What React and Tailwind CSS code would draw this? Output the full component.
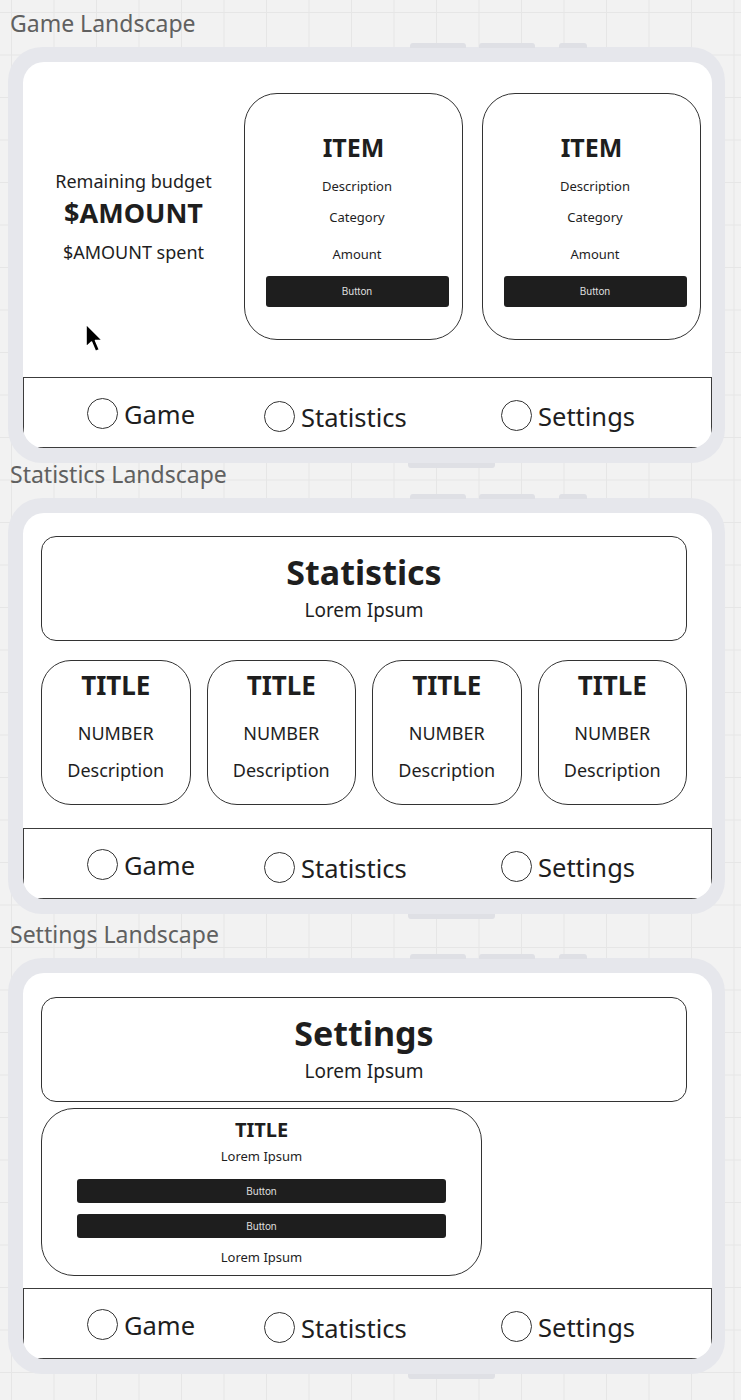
const font = "font-['Noto_Sans',sans-serif]";

const Cursor = () => (
  <svg className="absolute left-[61px] top-[260px]" width="21" height="33" viewBox="0 0 21 33">
    <path
      d="M2 2 L2 25 L7.5 20 L11.5 29.5 L15.5 27.8 L11.5 18.5 L18.5 18.5 Z"
      fill="#000"
      stroke="#fff"
      strokeWidth="1.6"
      strokeLinejoin="round"
    />
  </svg>
);

const DarkButton = ({ className }) => (
  <div
    className={`bg-[#1e1e1e] rounded-[3px] flex items-center justify-center text-[10px] text-[#dedede] font-['Inter',sans-serif] ${className}`}
  >
    Button
  </div>
);

const NavItem = ({ label, className }) => (
  <div className={`flex items-center gap-[6px] h-[31px] ${className}`}>
    <span className="w-[31px] h-[31px] rounded-full border border-[#333] shrink-0" />
    <span>{label}</span>
  </div>
);

const Nav = () => (
  <div className="h-[71px] shrink-0 border border-[#3c3c3c] flex pl-[63px] text-[25.5px] leading-[30px] text-[#1e1e1e]">
    <NavItem label="Game" className="mt-[20px] w-[177px]" />
    <NavItem label="Statistics" className="mt-[23px] w-[237px]" />
    <NavItem label="Settings" className="mt-[22px]" />
  </div>
);

const Frame = ({ children }) => (
  <div className="relative w-[717px] h-[416px] rounded-[34px] bg-[#e6e7ec] pt-[15px] pb-[15px] pl-[15px] pr-[13px]">
    <div className="absolute -top-[4px] left-[402px] w-[56px] h-[5px] rounded-t-[3px] bg-[#dfe0e5]" />
    <div className="absolute -top-[4px] left-[471px] w-[56px] h-[5px] rounded-t-[3px] bg-[#dfe0e5]" />
    <div className="absolute -top-[4px] left-[551px] w-[28px] h-[5px] rounded-t-[3px] bg-[#dfe0e5]" />
    <div className="absolute -bottom-[5px] left-[400px] w-[87px] h-[5px] rounded-b-[3px] bg-[#dfe0e5]" />
    <div className="relative h-full rounded-[21px] bg-white overflow-hidden flex flex-col">
      <div className="flex-1 min-h-0">{children}</div>
      <Nav />
    </div>
  </div>
);

const Header = ({ title }) => (
  <div className="w-[646px] h-[105px] rounded-[15px] border border-[#333] flex flex-col items-center pt-[15px]">
    <div className="text-[34px] font-bold leading-[40px]">{title}</div>
    <div className="mt-[6px] text-[19px] leading-[24px]">Lorem Ipsum</div>
  </div>
);

const ItemCard = () => (
  <div className="w-[219px] h-[247px] rounded-[33px] border border-[#333] flex flex-col items-center pt-[38px]">
    <div className="text-[25px] font-bold leading-[30px]">ITEM</div>
    <div className="ml-[7px] mt-[15px] text-[13px] leading-[18px]">Description</div>
    <div className="ml-[7px] mt-[13px] text-[13px] leading-[18px]">Category</div>
    <div className="ml-[7px] mt-[19px] text-[13px] leading-[18px]">Amount</div>
    <DarkButton className="ml-[7px] mt-[13px] w-[183px] h-[31px]" />
  </div>
);

const StatCard = () => (
  <div className="h-[145px] rounded-[30px] border border-[#333] flex flex-col items-center pt-[9px]">
    <div className="text-[26px] font-bold leading-[30px]">TITLE</div>
    <div className="mt-[21px] text-[18px] leading-[24px]">NUMBER</div>
    <div className="mt-[13px] text-[18px] leading-[24px]">Description</div>
  </div>
);

const Title = ({ children, className = '' }) => (
  <div className={`ml-[2px] mb-[13px] text-[23px] leading-[22px] text-[#606060] ${className}`}>{children}</div>
);

export default function App() {
  return (
    <div
      className={`min-h-[1400px] bg-[#f2f2f2] bg-[linear-gradient(to_right,#e6e6e6_1px,transparent_1px),linear-gradient(to_bottom,#e6e6e6_1px,transparent_1px)] bg-[size:42.5px_42.5px] bg-[position:11px_12px] pt-[12px] pl-[8px] text-[#1e1e1e] ${font}`}
    >
      <Title>Game Landscape</Title>
      <Frame>
        <div className="relative h-full flex">
          <div className="w-[221px] flex flex-col items-center pt-[107px]">
            <div className="text-[18px] leading-[24px]">Remaining budget</div>
            <div className="mt-[4px] text-[27px] font-bold leading-[32px]">$AMOUNT</div>
            <div className="mt-[11px] text-[18px] leading-[24px]">$AMOUNT spent</div>
          </div>
          <div className="pt-[31px] flex gap-[19px]">
            <ItemCard />
            <ItemCard />
          </div>
          <Cursor />
        </div>
      </Frame>

      <Title>Statistics Landscape</Title>
      <Frame>
        <div className="px-[18px] pt-[23px]">
          <Header title="Statistics" />
          <div className="mt-[19px] w-[646px] grid grid-cols-4 gap-[16px]">
            <StatCard />
            <StatCard />
            <StatCard />
            <StatCard />
          </div>
        </div>
      </Frame>

      <Title className="mt-[9px]">Settings Landscape</Title>
      <Frame>
        <div className="px-[18px] pt-[24px]">
          <Header title="Settings" />
          <div className="mt-[6px] w-[441px] h-[168px] rounded-[33px] border border-[#333] flex flex-col items-center pt-[9px]">
            <div className="text-[20px] font-bold leading-[24px]">TITLE</div>
            <div className="mt-[5px] text-[13px] leading-[18px]">Lorem Ipsum</div>
            <DarkButton className="mt-[14px] w-[369px] h-[24px]" />
            <DarkButton className="mt-[11px] w-[369px] h-[24px]" />
            <div className="mt-[10px] text-[13px] leading-[18px]">Lorem Ipsum</div>
          </div>
        </div>
      </Frame>
    </div>
  );
}
